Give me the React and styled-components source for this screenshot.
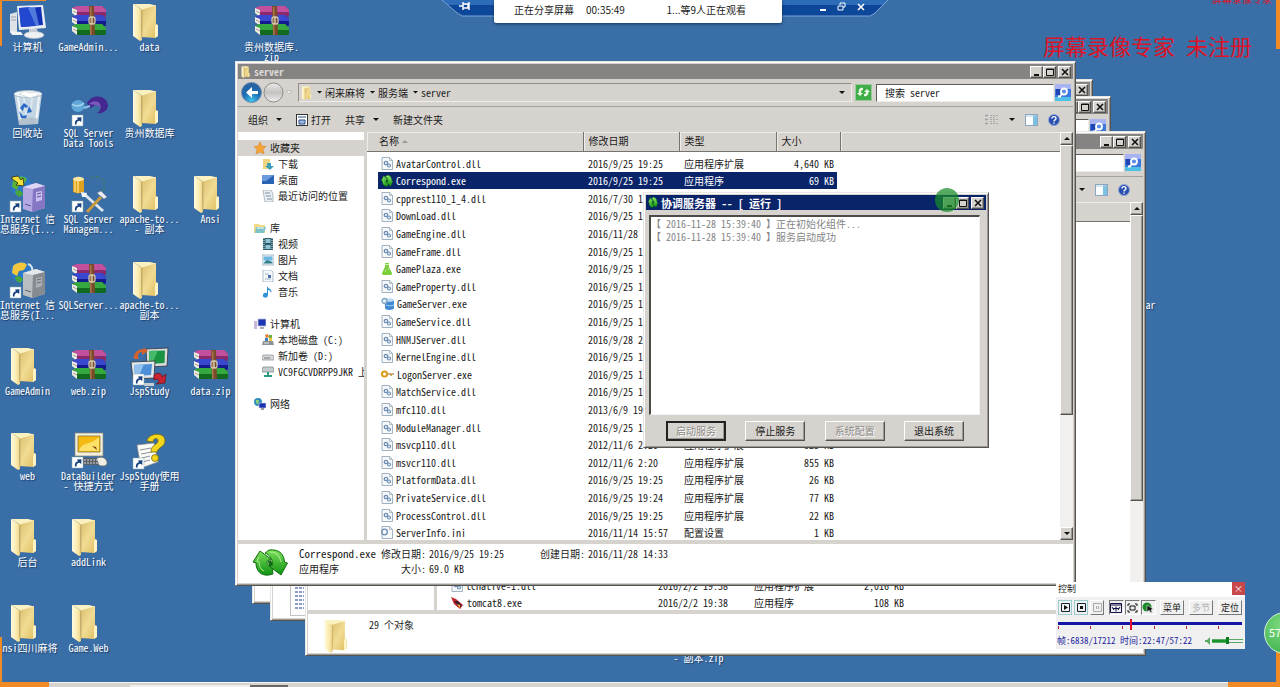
import React from "react";
import styled, { createGlobalStyle, css } from "styled-components";

const Global = createGlobalStyle`
  *, *::before, *::after { box-sizing: border-box; }
  html, body, #root { height: 100%; margin: 0; }
  body {
    overflow: hidden;
    background: #3a6ea7;
    color: #1a1a1a;
    font: 10px/14px "Noto Sans Mono CJK SC", "Liberation Mono", "Noto Sans CJK SC", monospace;
  }
  button, input { font: inherit; color: inherit; margin: 0; padding: 0; border: 0; background: none; }
  ul { list-style: none; margin: 0; padding: 0; }
  p { margin: 0; }
  svg { display: block; flex: none; }
`;

const raised = css`
  border: 1px solid;
  border-color: #ffffff #55534f #55534f #ffffff;
  box-shadow: inset -1px -1px 0 #9c9994;
`;

/* ---------- drawings ---------- */

const FolderIcon = ({ w = 35, h = 38, box = "0 0 35 38" }) => (
  <svg width={w} height={h} viewBox={box}>
    <defs>
      <linearGradient id="fBack" x1="0" x2="1" y1="0" y2="1">
        <stop offset="0" stopColor="#d8bd6c" />
        <stop offset=".5" stopColor="#f1dc94" />
        <stop offset="1" stopColor="#dfbd5c" />
      </linearGradient>
      <linearGradient id="fFront" x1="0" x2="1">
        <stop offset="0" stopColor="#fffbe0" />
        <stop offset=".6" stopColor="#faeaad" />
        <stop offset="1" stopColor="#ecd283" />
      </linearGradient>
    </defs>
    <path d="M9 3 24 2V22l2 1v10l-3 2-13-1z" fill="url(#fBack)" />
    <path d="M24 21l2 1v11l-3 2V24z" fill="#fdf3c4" />
    <path d="M1 1h17l6 1.500-14 4z" fill="#fbf0c0" />
    <path d="M1 1 9 6l1 31-2 1L1 33z" fill="url(#fFront)" />
    <path d="M10 7v28" stroke="#c7a552" strokeWidth=".8" />
  </svg>
);

const SmallFolder = ({ w = 11, h = 13 }) => <FolderIcon w={w} h={h} box="0 0 27 38" />;

const Shortcut = ({ x = 0, y = 25 }) => (
  <g transform={`translate(${x} ${y})`}>
    <rect width="11" height="11" fill="#fff" stroke="#8aa" strokeWidth=".5" />
    <path d="M3 9.500C2.500 6 4 4.500 6 4.500L5 2.500 9.500 2.200 9.200 7 7.500 5.800C5.500 5.800 4.500 7 4.500 9.500z" fill="#17417f" />
  </g>
);

const RarIcon = () => (
  <svg width="36" height="34" viewBox="0 -2 36 34">
    {[["#c2509c", "#8a2a6c", 2], ["#3a48d0", "#141b8c", 11], ["#35a83f", "#126a1e", 20]].map(([a, b, y]) => (
      <g key={y}>
        <path d={`M1 ${y + 1} 6 ${y - 1}H31L35 ${y + 3}v6l-1 1H6L1 ${y + 5}z`} fill={b} />
        <path d={`M1 ${y + 1} 6 ${y - 1}H31L35 ${y + 3}H6z`} fill={a} />
        <path d={`M1 ${y + 1} 6 ${y + 3}v7L1 ${y + 6}z`} fill="#f0ece4" />
        <path d={`M6 ${y + 4}H35`} stroke={a} strokeWidth="2" />
        <path d={`M2 ${y + 4} 6 ${y + 6}`} stroke="#8a8680" strokeWidth=".8" />
      </g>
    ))}
    <path d="M18 1h5l1 29h-5z" fill="#7a4a2a" />
    <path d="M19 2h1.500v28H19z" fill="#a8744a" />
    <rect x="18" y="12" width="6" height="7" rx="2" fill="none" stroke="#cfc7a8" strokeWidth="1.300" />
    <path d="M21 12v7" stroke="#e8e2c8" strokeWidth="1.200" />
  </svg>
);

const ComputerIcon = () => (
  <svg width="38" height="36" viewBox="0 -1 38 36">
    <path d="M1 10 8 8v20l-7 1z" fill="#dfe2e6" />
    <path d="M2 13h5M2 16h5" stroke="#9aa0a8" />
    <path d="M8 2 34 1 37 24 10 26z" fill="#e9edf2" />
    <path d="M10 4 32 3 34 21 12 23z" fill="#1230b4" />
    <path d="M10 4 21 3 27 22 12 23z" fill="#2148cf" />
    <path d="M19 3.500 26 3 30 21 27 22z" fill="#78a8f2" opacity=".6" />
    <path d="M20 25h8l1 4h-9z" fill="#c9ced6" />
    <ellipse cx="25" cy="31" rx="10" ry="3.500" fill="#eef0f3" stroke="#b7bcc4" strokeWidth=".6" />
    <path d="M1 27 12 28 14 31 3 31z" fill="#f2f3f5" />
  </svg>
);

const BinIcon = () => (
  <svg width="32" height="37" viewBox="0 0 32 37">
    <path d="M2 5 30 4 26 35 7 36z" fill="#cfdce8" opacity=".92" />
    <path d="M6 8 9 33M27 7 24 34" stroke="#fff" strokeWidth="2" opacity=".8" />
    <path d="M12 9l3 24M20 9l-1 10" stroke="#eef4f8" strokeWidth="2" opacity=".6" />
    <ellipse cx="16" cy="5" rx="14" ry="3.500" fill="#f6f9fb" stroke="#a3b4c2" strokeWidth=".8" />
    <path d="M7 5 13 2l5 2 6-1 3 3-9 3z" fill="#fff" stroke="#b4bec8" strokeWidth=".5" />
    <path d="M8 19l4-5 4 3-2 2-2-1-1 4zM17 17l3 6-5 1zM7 22l4 5 4-1-1 4-5-1z" fill="#2869c8" />
    <path d="M7 31c6-3 13-3 19-1l-1 5-18 1z" fill="#aebbc6" opacity=".8" />
  </svg>
);

const DataToolsIcon = () => (
  <svg width="38" height="40" viewBox="0 -4 38 40">
    <ellipse cx="8" cy="13" rx="6.500" ry="6" fill="#5fa8d8" />
    <path d="M2 11c3 3 9 2 12-1" stroke="#a8d4ee" strokeWidth="1.500" fill="none" />
    <path d="M17 10c5-10 20-8 21 2 0 6-6 9-11 8 5-3 4-8 0-8s-5 4-8 3z" fill="#42288f" />
    <path d="M19 11c5-5 12-3 12 4-4-4-8-3-12-4z" fill="#7a58bd" />
    <path d="M14 15 20 13" stroke="#8cc7e8" strokeWidth="2" />
    <Shortcut x={2} y={22} />
  </svg>
);

const IisIcon = ({ gray }) => (
  <svg width="38" height="38" viewBox="0 0 38 38">
    <circle cx="12" cy="11" r="10.500" fill="#2a79c8" />
    <path d="M4 5c4-4 11-5 14-1l-3 5-5 1-2 5-5-3z" fill={gray ? "#f3c63c" : "#58b13b"} />
    <path d="M6 16c4-2 7 0 8 3l-3 3c-3-1-5-3-5-6z" fill="#4aa63a" />
    {gray ? <path d="M19 3c4 1 5 5 4 9" stroke="#d8e8f0" strokeWidth="2" fill="none" /> : <path d="M3 2 9 1l3 4 2-2 1 8-8-1 2-2-6-4z" fill="#f0e23a" stroke="#2b2b10" strokeWidth=".8" />}
    <path d="M14 12 27 8 36 11 36 33 23 37 14 34z" fill={gray ? "#b9bec2" : "#b4a8e0"} />
    <path d="M14 12 27 8 36 11 24 14z" fill={gray ? "#e6e9eb" : "#ddd6f4"} />
    <path d="M24 14 36 11V33L23 37z" fill={gray ? "#858b90" : "#8577c4"} />
    <path d="M27 17l6-1v9l-6 2z" fill={gray ? "#a9afb3" : "#c9bff0"} />
    <path d="M28 19l4-1M28 22l4-1M16 29l6 2" stroke={gray ? "#5f666b" : "#5c4f9a"} />
    <Shortcut x={1} y={26} />
  </svg>
);

const ManagementIcon = () => (
  <svg width="38" height="38" viewBox="0 0 38 38">
    <path d="M3 4v12c0 3 11 3 11 0V4z" fill="#e0a21e" />
    <path d="M5 5v12M8 5v13" stroke="#f9d97a" strokeWidth="1.500" />
    <ellipse cx="8.500" cy="4" rx="5.500" ry="2.200" fill="#fbe7a2" />
    <path d="M21 3c6-3 12 0 13 5v8l-5 2" stroke="#3d7c6b" strokeWidth="1.500" strokeDasharray="3 2" fill="none" />
    <path d="M14 19 33 36" stroke="#dfe6ee" strokeWidth="3" />
    <path d="M31 22 17 37" stroke="#c79a42" strokeWidth="3" />
    <path d="M27 18l7 6 3-2-6-6z" fill="#e9edf2" stroke="#7c8794" strokeWidth=".6" />
    <path d="M11 17l6 1-1 4-4 0z" fill="#f3f6f9" />
    <Shortcut x={2} y={26} />
  </svg>
);

const StudyIcon = () => (
  <svg width="40" height="40" viewBox="0 0 40 40">
    <path d="M16 2 38 1 37 19 17 20z" fill="#d9dde0" stroke="#333" strokeWidth=".8" />
    <path d="M19 4 35 3.500 34.500 16 19.500 17z" fill="#199242" />
    <path d="M19 4 28 3.500 22 17h-3z" fill="#45b96a" />
    <path d="M1 15 25 14 24 31 3 32z" fill="#e1e6ea" stroke="#333" strokeWidth=".8" />
    <path d="M4 18 22 17 21 28 5 29z" fill="#4c8ed8" />
    <path d="M4 18 14 17 9 29H5z" fill="#93c1ee" />
    <path d="M4 12C3 6 8 2 14 2l-1-2 5 4-6 4v-3c-4 0-5 4-3 7z" fill="#d5622a" />
    <path d="M24 28c5-4 9 0 8 2l4-3-1 9-9 1 3-2c0-3-2-3-5-2z" fill="#c92230" stroke="#5a0d14" strokeWidth=".6" />
    <path d="M14 36h10v3H14z" fill="#c8cdd1" />
    <Shortcut x={3} y={27} />
  </svg>
);

const BuilderIcon = () => (
  <svg width="38" height="37" viewBox="0 0 38 37">
    <path d="M5 1H33V24H5z" fill="#f2efdf" stroke="#8a8672" strokeWidth=".7" />
    <path d="M8 4H30V20H8z" fill="#f5b913" stroke="#7a6a1f" strokeWidth=".7" />
    <path d="M9 19C12 9 20 14 29 5v14z" fill="#fbe06a" />
    <path d="M22 14l4 1 1 3z" fill="#7c3c10" />
    <path d="M12 26h18v7H12z" fill="#5a5f66" />
    <path d="M14 28h14M14 31h14" stroke="#d7dbdf" strokeDasharray="2 1" />
    <path d="M27 26c5-2 9 0 10 4s-5 5-8 3" fill="#f0eee4" stroke="#6e6a5c" strokeWidth=".7" />
    <Shortcut x={2} y={25} />
  </svg>
);

const HelpDocIcon = () => (
  <svg width="38" height="38" viewBox="0 0 38 38">
    <path d="M6 13 23 11 27 30 10 36z" fill="#fbfbf7" stroke="#8d8d84" strokeWidth=".7" />
    <path d="M9 18l11-2M10 22l11-2M11 26l8-2M11 30l8-2" stroke="#8d9299" />
    <path d="M16 9C17 1 34-1 34 9c0 6-7 6-8 11h-6c0-8 7-7 7-11 0-4-5-3-5 1z" fill="#f2d51c" stroke="#7b6a0b" strokeWidth=".8" />
    <circle cx="24" cy="26" r="3.500" fill="#f2d51c" stroke="#7b6a0b" strokeWidth=".8" />
    <Shortcut x={2} y={26} />
  </svg>
);

const SyncIcon = ({ w = 12, h = 12 }) => (
  <svg width={w} height={h} viewBox="0 0 36 28" preserveAspectRatio="none">
    <defs>
      <linearGradient id="syncG" x1="0" y1="0" x2="0" y2="1">
        <stop offset="0" stopColor="#7be05a" />
        <stop offset="1" stopColor="#0f9113" />
      </linearGradient>
    </defs>
    <path d="M8 2 1 13l3 1c0 8 5 13 13 12l4-1-1-7c-4 0-5-3-5-6l4-2z" fill="url(#syncG)" stroke="#13700f" />
    <path d="M29 26l6.500-12-3-1C32 4 26 0 17 1l-4 3c5 2 7 6 8 11l-4 2z" fill="url(#syncG)" stroke="#13700f" />
    <path d="M16 12l3-1 2 5-4 2z" fill="#0c6a10" />
    <path d="M18 3c6 0 10 4 11 10M7 8 5 12l2 1c0 4 2 8 5 9" stroke="#b5f29a" strokeWidth="1.300" fill="none" opacity=".7" />
  </svg>
);

const DllIcon = ({ ini }) => (
  <svg width="12" height="13" viewBox="0 0 12 13">
    <path d="M1 .5h7.500l3 3V12.500H1z" fill="#f6f9fc" stroke="#97a8b8" strokeWidth=".9" />
    <path d="M8.500.5v3h3" fill="none" stroke="#97a8b8" strokeWidth=".7" />
    <circle cx={ini ? 3.500 : 5} cy="6" r={ini ? 2.800 : 1.700} fill="none" stroke="#6d8db2" strokeWidth="1.300" />
    {!ini && <circle cx="8" cy="8.500" r="1.500" fill="none" stroke="#6d8db2" strokeWidth="1.200" />}
  </svg>
);

const FlaskIcon = () => (
  <svg width="12" height="12" viewBox="0 0 12 12">
    <path d="M4 0h4v4l3 6c0 2-1 2-2 2H3c-2 0-2-1-2-2l3-6z" fill="#7ccf3a" />
    <path d="M4.500 1.500h3M4 8h1M7 6h1" stroke="#e7f8cf" />
  </svg>
);

const ServerIcon = () => (
  <svg width="13" height="13" viewBox="0 0 13 13">
    <path d="M4 3v8c0 2.500 9 2.500 9 0V3z" fill="#3f88d2" />
    <ellipse cx="8.500" cy="3" rx="4.500" ry="1.800" fill="#bcdcf5" />
    <circle cx="3.500" cy="4" r="2.500" fill="#e4eff8" stroke="#7fa6c8" strokeWidth="1.400" />
    <path d="M5 8c2 1 5 1 8 0" stroke="#a9cff0" fill="none" />
  </svg>
);

const KeyIcon = () => (
  <svg width="13" height="12" viewBox="0 0 13 12">
    <circle cx="3.500" cy="6" r="2.600" fill="none" stroke="#dc9c12" strokeWidth="2" />
    <path d="M6 6h7M10 6v2" stroke="#b99a56" strokeWidth="1.600" />
  </svg>
);

const TomcatIcon = () => (
  <svg width="13" height="13" viewBox="0 0 13 13">
    <path d="M0 1 5 3 12 9 9 13 3 8z" fill="#c3262c" />
    <path d="M3 5 7 5 11 10 8 11z" fill="#3a2030" />
    <path d="M6 8l3 1 0 3z" fill="#f0c33c" />
  </svg>
);

const navDrawings = {
  star: <path d="M6 0 8 4l4 .5-3 3 1 4.500-4-2-4 2 1-4.500-3-3L4 4z" fill="#f6a43a" stroke="#c9781a" strokeWidth=".5" />,
  down: <><path d="M1 1h7v10H1z" fill="#f0d67e" /><path d="M5 5h4v3h3l-4 4-5-4h2z" fill="#3f9fb4" /></>,
  desk: <><path d="M0 1h12v9H0z" fill="#2b63b4" /><path d="M0 1h12L4 7H0z" fill="#6b9bdc" /></>,
  recent: <><path d="M1 0h8l2 4v8H3z" fill="#e8eef2" stroke="#8fa0ac" strokeWidth=".7" /><path d="M3 3h5M4 6h5M5 9h5" stroke="#7d95a6" /></>,
  lib: <><path d="M0 2h5l1 1h5v8H0z" fill="#f1d989" /><path d="M2 5h10l-2 6H1z" fill="#7ec3c8" /><path d="M3 6h7" stroke="#fff" /></>,
  video: <><path d="M1 0h10v12H1z" fill="#2c5c6c" /><path d="M3.500 1h5v4h-5zM3.500 7h5v4h-5z" fill="#8fc5d2" /><path d="M2 0v12M10 0v12" stroke="#dbe8ec" strokeDasharray="1 1" /></>,
  pic: <><path d="M0 1h12v10H0z" fill="#e8f1f5" stroke="#8fa5b2" strokeWidth=".7" /><path d="M1.500 2.500h9v4h-9z" fill="#6fb6e2" /><path d="M1.500 9 5 6l5.500 2v1.500h-9z" fill="#2f7e8f" /></>,
  doc: <><path d="M1 0h8l2 2v10H1z" fill="#f6f9fb" stroke="#90a5b8" strokeWidth=".7" /><path d="M3 4h4M3 9h6" stroke="#9fb4c6" /><path d="M6 5h3v3H6z" fill="#4a6fae" /></>,
  music: <path d="M5 0c1 3 6 3 4 7 0-2-2-3-3-3v5c0 4-6 3-5 0 0-2 2-2.500 4-2z" fill="#2f93d6" />,
  pc: <><path d="M4 1h8v7H4z" fill="#1c35b4" stroke="#b9c0dc" strokeWidth=".8" /><path d="M6 9h4v2H6z" fill="#a9a9b9" /><path d="M0 3h3v8H0z" fill="#c8b8dc" /></>,
  disk: <><path d="M1 7h10l1 4H0z" fill="#8d9499" /><path d="M2 9h5" stroke="#e2e6e8" /><path d="M3 1 6 0l1 3-3 1z" fill="#e07d2a" /><path d="M7 1l3 0v3H7z" fill="#6bb43c" /><path d="M3 4l3 0v3H3z" fill="#3b7ec2" /><path d="M7 4h3v3H7z" fill="#efc63a" /></>,
  drive: <><path d="M1 5h10l1 2v3H0V7z" fill="#d5d8da" stroke="#888d90" strokeWidth=".7" /><path d="M2 8h6" stroke="#777" /></>,
  net: <><path d="M1 1h10l1 3v2H0V4z" fill="#c3cacd" stroke="#7b8487" strokeWidth=".7" /><path d="M6 6v5M2 10h8" stroke="#2d9a84" strokeWidth="2" /></>,
  world: <><circle cx="4" cy="4" r="4" fill="#2f8fb8" /><path d="M2 2l3 0-1 4-2-1z" fill="#8fd07a" /><path d="M5 5h7v5H5z" fill="#1c2fae" stroke="#c2c8e2" strokeWidth=".7" /><path d="M7 10h3v2H7z" fill="#999" /></>,
};

const NavIcon = ({ kind }) => (
  <svg width="12" height="12" viewBox="0 0 12 12">{navDrawings[kind]}</svg>
);

const Caret = ({ s = 6 }) => (
  <svg width={s} height={s / 2} viewBox="0 0 6 3"><path d="M0 0h6L3 3z" fill="#111" /></svg>
);

const SearchGlyph = () => (
  <svg width="16" height="17" viewBox="0 0 16 17">
    <rect width="16" height="17" fill="#3f78dc" />
    <path d="M0 0h16v5H0z" fill="#a8b4f2" />
    <path d="M0 13h16v4H0z" fill="#4fc0e6" />
    <path d="M1 5h4v6H1z" fill="#1f45b4" />
    <circle cx="9" cy="7.500" r="3" fill="#5a8ee6" stroke="#fff" strokeWidth="1.800" />
    <path d="M3 12.500h2l2-3" stroke="#fff" strokeWidth="1.800" fill="none" />
  </svg>
);

const RefreshGlyph = () => (
  <svg width="17" height="17" viewBox="0 0 17 17">
    <rect x=".5" y=".5" width="16" height="16" fill="#3fae49" stroke="#9cc79c" />
    <path d="M4 9c-1-3 1-6 4-5v2c-2 0-2 1-2 3h2l-3 3-3-3zM9 8l3-3 3 3h-1.500c0 3-2 5-4.500 4v-2c2 0 2-1 2-2z" fill="#e9f8e4" />
  </svg>
);

const HelpGlyph = () => (
  <svg width="12" height="12" viewBox="0 0 12 12">
    <circle cx="6" cy="6" r="5.500" fill="#2a4fae" stroke="#8ea3d8" />
    <path d="M4 4.500C4 2 8 2 8 4.500 8 6 6 5.800 6 7.500M6 8.500v1.300" stroke="#fff" strokeWidth="1.400" fill="none" />
  </svg>
);

const PaneGlyph = () => (
  <svg width="13" height="12" viewBox="0 0 13 12">
    <rect x=".5" y=".5" width="12" height="11" fill="#fbfdff" stroke="#8ba7bd" />
    <path d="M8 1h4v10H8z" fill="#7cc0e4" />
    <path d="M1 2h11" stroke="#b8cfe0" />
  </svg>
);

const ViewGlyph = () => (
  <svg width="13" height="12" viewBox="0 0 13 12">
    <path d="M0 1.500h3M0 5.500h3M0 9.500h3" stroke="#9aa0a6" strokeWidth="1.500" />
    <path d="M5 1.500h8M5 5.500h8M5 9.500h8M5 3.500h5M5 7.500h5" stroke="#a6a6a6" strokeDasharray="2 1" />
  </svg>
);

const NavArrows = () => (
  <svg width="52" height="23" viewBox="0 0 52 23">
    <defs>
      <radialGradient id="backG" cx=".5" cy=".9" r=".9">
        <stop offset="0" stopColor="#3fc4ec" />
        <stop offset=".5" stopColor="#1f6cb2" />
        <stop offset="1" stopColor="#2a5f9c" />
      </radialGradient>
      <linearGradient id="fwdG" x1="0" y1="0" x2="0" y2="1">
        <stop offset="0" stopColor="#ececec" />
        <stop offset=".5" stopColor="#c4c2c0" />
        <stop offset="1" stopColor="#efefef" />
      </linearGradient>
    </defs>
    <circle cx="10.500" cy="11.500" r="10" fill="url(#backG)" stroke="#6f8fae" />
    <path d="M5 11.500 11 6v4h6v3h-6v4z" fill="#fff" />
    <circle cx="32.500" cy="11.500" r="9.500" fill="url(#fwdG)" stroke="#8f8d8b" />
    <path d="M45 10h6l-3 3z" fill="#f5f5f5" stroke="#aaa" strokeWidth=".6" />
  </svg>
);

/* ---------- desktop ---------- */

const Screen = styled.main`
  position: relative;
  height: 100%;
  overflow: hidden;
`;

const IconGrid = styled.ul`
  display: grid;
  grid-template-columns: repeat(21, 61px);
  grid-template-rows: repeat(8, 1fr);
  height: 100%;
  margin-left: -3px;
`;

const IconCell = styled.li`
  grid-column: ${(p) => p.$col};
  grid-row: ${(p) => p.$row};
  display: flex;
  flex-direction: column;
  align-items: center;
  min-width: 0;
`;

const IconArt = styled.span`
  display: flex;
  justify-content: center;
  width: 40px;
  height: 42px;
  padding-top: 3px;
  flex: none;
`;

const IconLabel = styled.span`
  color: #fff;
  line-height: 10px;
  white-space: pre;
  text-align: center;
  text-shadow: 1px 1px 1px #1c3f68;
`;

const desktopIcons = [
  [1, 1, <ComputerIcon />, "计算机"],
  [2, 1, <RarIcon />, "GameAdmin..."],
  [3, 1, <FolderIcon />, "data"],
  [5, 1, <RarIcon />, "贵州数据库.\nzip"],
  [1, 2, <BinIcon />, "回收站"],
  [2, 2, <DataToolsIcon />, "SQL Server\nData Tools"],
  [3, 2, <FolderIcon />, "贵州数据库"],
  [1, 3, <IisIcon />, "Internet 信\n息服务(I..."],
  [2, 3, <ManagementIcon />, "SQL Server\nManagem..."],
  [3, 3, <FolderIcon />, "apache-to...\n- 副本"],
  [4, 3, <FolderIcon />, "Ansi"],
  [1, 4, <IisIcon gray />, "Internet 信\n息服务(I..."],
  [2, 4, <RarIcon />, "SQLServer..."],
  [3, 4, <FolderIcon />, "apache-to...\n副本"],
  [19, 4, null, "          ar"],
  [1, 5, <FolderIcon />, "GameAdmin"],
  [2, 5, <RarIcon />, "web.zip"],
  [3, 5, <StudyIcon />, "JspStudy"],
  [4, 5, <RarIcon />, "data.zip"],
  [1, 6, <FolderIcon />, "web"],
  [2, 6, <BuilderIcon />, "DataBuilder\n- 快捷方式"],
  [3, 6, <HelpDocIcon />, "JspStudy使用\n手册"],
  [1, 7, <FolderIcon />, "后台"],
  [2, 7, <FolderIcon />, "addLink"],
  [1, 8, <FolderIcon />, "Ansi四川麻将"],
  [2, 8, <FolderIcon />, "Game.Web"],
  [12, 8, null, "\n- 副本.zip"],
];

const Watermark = styled.p`
  position: absolute;
  top: ${(p) => (p.$small ? "-8px" : "29px")};
  right: ${(p) => (p.$small ? "8px" : "28px")};
  color: #dc1428;
  font-size: ${(p) => (p.$small ? "10px" : "22px")};
  line-height: ${(p) => (p.$small ? "14px" : "32px")};
  white-space: pre;
`;

const Corner = styled.span`
  position: absolute;
  ${(p) => p.$v}: 0;
  ${(p) => p.$h}: 0;
  width: ${(p) => p.$w}px;
  height: ${(p) => p.$t}px;
  border: 0 solid #f08a24;
  border-${(p) => p.$v}-width: ${(p) => p.$edge}px;
  border-${(p) => p.$h}-width: ${(p) => p.$side}px;
`;

const Taskbar = styled.footer`
  position: absolute;
  left: 0;
  right: 0;
  bottom: 0;
  display: flex;
  height: 5px;
  padding: 2px 0 0 130px;
  border-top: 1px solid #f4f4f2;
  background: #d6d3ce;
`;

const TaskSlot = styled.span`
  width: ${(p) => p.$w}px;
  background: ${(p) => (p.$on ? "#6b6866" : "#f0efec")};
`;

/* ---------- sharing bar ---------- */

const ShareDock = styled.header`
  position: absolute;
  top: 0;
  left: 442px;
  width: 446px;
  height: 17px;
`;

const SharePanel = styled.div`
  position: absolute;
  top: 0;
  left: 52px;
  width: 288px;
  height: 23px;
  display: flex;
  align-items: center;
  gap: 12px;
  padding: 0 20px 4px;
  background: #fff;
  border-radius: 0 0 2px 2px;
  box-shadow: 0 1px 3px #16335a;
  font-family: "Noto Sans CJK SC", sans-serif;
`;

const ShareViewers = styled.span`
  margin-left: auto;
  margin-right: 16px;
`;

const DockButtons = styled.div`
  position: absolute;
  top: 0;
  left: 374px;
  display: flex;
  gap: 6px;
`;

const DockButton = styled.button`
  width: 13px;
  height: 13px;
  display: grid;
  place-items: center;
`;

/* ---------- explorer window ---------- */

const Frame = styled.section`
  position: absolute;
  left: ${(p) => p.$x}px;
  top: ${(p) => p.$y}px;
  width: ${(p) => p.$w}px;
  height: ${(p) => p.$h}px;
  display: flex;
  flex-direction: column;
  padding: 2px;
  background: #d6d3ce;
  border: 1px solid;
  border-color: #e9e7e4 #55534f #55534f #e9e7e4;
  box-shadow: inset 1px 1px 0 #fff, inset -1px -1px 0 #9c9994;
`;

const TitleBar = styled.header`
  display: flex;
  align-items: center;
  gap: 3px;
  height: 15px;
  flex: none;
  padding: 0 2px;
  background: ${(p) => (p.$active ? "#0a246a" : "#868383")};
  color: ${(p) => (p.$active ? "#ffffff" : "#dedbd8")};
  font-weight: bold;
  font-size: ${(p) => (p.$active ? "11px" : "10px")};
`;

const TitleButtons = styled.div`
  display: flex;
  margin-left: auto;
`;

const CaptionButton = styled.button`
  ${raised}
  width: 13px;
  height: 12px;
  display: grid;
  place-items: center;
  background: #d6d3ce;
  &:last-child { margin-left: 2px; }
`;

const glyphs = {
  min: <path d="M1 7h5" stroke="#111" strokeWidth="2" />,
  max: <path d="M.5 1h7v6.500h-7zM.5 1.500h7" stroke="#111" fill="none" />,
  close: <path d="M1 1l6 6M7 1 1 7" stroke="#111" strokeWidth="1.600" />,
};

const Caption = ({ kind, label }) => (
  <CaptionButton type="button" aria-label={label}>
    <svg width="8" height="8" viewBox="0 0 8 8">{glyphs[kind]}</svg>
  </CaptionButton>
);

const CaptionSet = () => (
  <TitleButtons>
    <Caption kind="min" label="最小化" />
    <Caption kind="max" label="最大化" />
    <Caption kind="close" label="关闭" />
  </TitleButtons>
);

const AddressRow = styled.div`
  display: flex;
  align-items: center;
  gap: 3px;
  height: 28px;
  flex: none;
  padding: 0 2px 0 3px;
  border-bottom: 1px solid #a5a29d;
`;

const AddressBox = styled.div`
  flex: 1;
  display: flex;
  align-items: center;
  gap: 5px;
  height: 19px;
  padding: 0 6px 0 2px;
  margin-left: 2px;
  border: 1px solid;
  border-color: #908d89 #efedea #efedea #908d89;
  > :last-child { margin-left: auto; }
`;

const PlainButton = styled.button`
  display: flex;
  align-items: center;
  gap: 3px;
  white-space: nowrap;
`;

const SearchBox = styled.input`
  width: 178px;
  height: 18px;
  padding-left: 8px;
  background: #fff;
  border: 1px solid;
  border-color: #5c5a57 #efedea #efedea #5c5a57;
  margin-left: 1px;
  margin-right: -2px;
  &::placeholder { color: #1a1a1a; opacity: 1; }
`;

const Toolbar = styled.div`
  display: flex;
  align-items: center;
  height: 25px;
  flex: none;
  gap: 14px;
  padding: 0 13px 0 10px;
`;

const ToolbarEnd = styled.div`
  display: flex;
  align-items: center;
  gap: 10px;
  margin-left: auto;
`;

const Body = styled.div`
  display: flex;
  flex: 1;
  min-height: 0;
  background: #fff;
`;

const NavPane = styled.ul`
  width: 126px;
  flex: none;
  padding-top: 8px;
  overflow: hidden;
`;

const NavItem = styled.li`
  height: 16px;
  background: ${(p) => (p.$on ? "#d6d3ce" : "none")};
`;

const NavButton = styled.button`
  display: flex;
  align-items: center;
  gap: 4px;
  height: 16px;
  padding-left: ${(p) => (p.$child ? 24 : 16)}px;
  white-space: nowrap;
`;

const ListPane = styled.div`
  flex: 1;
  min-width: 0;
  overflow: hidden;
  border-left: 3px solid #d6d3ce;
`;

const Files = styled.table`
  width: 100%;
  table-layout: fixed;
  border-collapse: collapse;
  white-space: nowrap;
`;

const HeadCell = styled.th`
  height: 19px;
  padding: 0 0 0 ${(p) => (p.$first ? 12 : 5)}px;
  text-align: left;
  font-weight: normal;
  background: #d6d3ce;
  border-bottom: 1px solid #77746f;
  border-right: ${(p) => (p.$last ? "0" : "1px solid #77746f")};
  box-shadow: inset 1px 1px 0 #efedea;
`;

const Gap = styled.tr`
  height: 3px;
`;

const FileRow = styled.tr`
  height: 18px;
  line-height: 15px;
  &:nth-child(5n + 3), &:nth-child(5n + 5) { height: 17px; }
  color: ${(p) => (p.$on ? "#ffffff" : "#1a1a1a")};
  td { padding: 0; }
  td:nth-child(n + 2):nth-child(-n + 5) { background: ${(p) => (p.$on ? "#0a246a" : "none")}; }
  td:nth-child(3), td:nth-child(4) { padding-left: 5px; }
  td:nth-child(5) { padding-right: 3px; text-align: right; }
`;

const FileName = styled.span`
  display: flex;
  align-items: center;
  gap: 3px;
  padding-left: 3px;
  height: 15px;
`;

const Scroll = styled.div`
  width: 13px;
  flex: none;
  display: flex;
  flex-direction: column;
  background: #f1f0ee;
`;

const ScrollButton = styled.button`
  ${raised}
  height: 13px;
  flex: none;
  display: grid;
  place-items: center;
  background: #d6d3ce;
  svg { transform: ${(p) => (p.$up ? "rotate(180deg)" : "none")}; }
`;

const Thumb = styled.div`
  ${raised}
  height: ${(p) => p.$h}px;
  background: #d6d3ce;
  margin-bottom: auto;
`;

const Details = styled.footer`
  display: flex;
  height: 43px;
  flex: none;
  gap: 11px;
  padding: 4px 14px 0;
  border-top: 4px solid #d6d3ce;
  background: #fff;
`;

const DetailArt = styled.div`
  width: 36px;
  padding-top: 1px;
`;

const DetailGrid = styled.dl`
  display: grid;
  grid-template-columns: auto 47px 108px auto auto;
  grid-auto-rows: 15px;
  align-content: start;
  column-gap: 3px;
  margin: -2px 0 0;
  line-height: 15px;
  white-space: nowrap;
  dt, dd { margin: 0; }
  dt { text-align: right; }
`;

const DetailName = styled.dd`
  font-size: 11px;
`;

const navTree = [
  ["star", "收藏夹", 0, true], ["down", "下载", 1], ["desk", "桌面", 1], ["recent", "最近访问的位置", 1], null,
  ["lib", "库", 0], ["video", "视频", 1], ["pic", "图片", 1], ["doc", "文档", 1], ["music", "音乐", 1], null,
  ["pc", "计算机", 0], ["disk", "本地磁盘 (C:)", 1], ["drive", "新加卷 (D:)", 1], ["net", "VC9FGCVDRPP9JKR 上", 1], null,
  ["world", "网络", 0],
];

const ext = "应用程序扩展";
const app = "应用程序";
const serverFiles = [
  ["AvatarControl.dll", "2016/9/25 19:25", ext, "4,640 KB"],
  ["Correspond.exe", "2016/9/25 19:25", app, "69 KB", <SyncIcon />],
  ["cpprest110_1_4.dll", "2016/7/30 1", "", ""],
  ["DownLoad.dll", "2016/9/25 1", "", ""],
  ["GameEngine.dll", "2016/11/28", "", ""],
  ["GameFrame.dll", "2016/9/25 1", "", ""],
  ["GamePlaza.exe", "2016/9/25 1", "", "", <FlaskIcon />],
  ["GameProperty.dll", "2016/9/25 1", "", ""],
  ["GameServer.exe", "2016/9/25 1", "", "", <ServerIcon />],
  ["GameService.dll", "2016/9/25 1", "", ""],
  ["HNMJServer.dll", "2016/9/28 2", "", ""],
  ["KernelEngine.dll", "2016/9/25 1", "", ""],
  ["LogonServer.exe", "2016/9/25 1", "", "", <KeyIcon />],
  ["MatchService.dll", "2016/9/25 1", "", ""],
  ["mfc110.dll", "2013/6/9 19", "", ""],
  ["ModuleManager.dll", "2016/9/25 1", "", ""],
  ["msvcp110.dll", "2012/11/6 2:20", ext, "523 KB"],
  ["msvcr110.dll", "2012/11/6 2:20", ext, "855 KB"],
  ["PlatformData.dll", "2016/9/25 19:25", ext, "26 KB"],
  ["PrivateService.dll", "2016/9/25 19:24", ext, "77 KB"],
  ["ProcessControl.dll", "2016/9/25 19:25", ext, "22 KB"],
  ["ServerInfo.ini", "2016/11/14 15:57", "配置设置", "1 KB", <DllIcon ini />],
];
const blank = ["", "", "", "", <span />];
const tomcatFiles = [
  ...Array(20).fill(blank),
  ["tcnative-1.dll", "2016/2/2 19:38", ext, "2,016 KB"],
  ["tomcat8.exe", "2016/2/2 19:38", app, "108 KB", <TomcatIcon />],
];

function Explorer({ x, y, title, path = [], nav = [], files = [], selected, thumb = 270, details }) {
  return (
    <Frame $x={x} $y={y} $w={841} $h={525} aria-label={title || "资源管理器"}>
      <TitleBar>
        <SmallFolder h={12} />
        {title}
        <CaptionSet />
      </TitleBar>
      <AddressRow>
        <NavArrows />
        <AddressBox>
          <SmallFolder h={14} />
          {path.map((p) => (
            <PlainButton type="button" key={p}><Caret s={5} />{p}</PlainButton>
          ))}
          <Caret />
        </AddressBox>
        <PlainButton type="button" aria-label="刷新"><RefreshGlyph /></PlainButton>
        <SearchBox type="search" aria-label="搜索" placeholder={title ? `搜索 ${title}` : ""} />
        <PlainButton type="button" aria-label="开始搜索"><SearchGlyph /></PlainButton>
      </AddressRow>
      <Toolbar>
        {title && (
          <>
            <PlainButton type="button">组织&nbsp;<Caret /></PlainButton>
            <PlainButton type="button">
              <svg width="12" height="12" viewBox="0 0 12 12">
                <rect x=".5" y=".5" width="11" height="11" fill="#fff" stroke="#333" />
                <path d="M2 3h8M3 6h6v4H3z" stroke="#2b4f8e" fill="#9fb8dc" />
              </svg>
              打开
            </PlainButton>
            <PlainButton type="button">共享&nbsp;<Caret /></PlainButton>
            <PlainButton type="button">新建文件夹</PlainButton>
          </>
        )}
        <ToolbarEnd>
          <PlainButton type="button" aria-label="视图"><ViewGlyph />&nbsp;<Caret /></PlainButton>
          <PlainButton type="button" aria-label="预览窗格"><PaneGlyph /></PlainButton>
          <PlainButton type="button" aria-label="帮助"><HelpGlyph /></PlainButton>
        </ToolbarEnd>
      </Toolbar>
      <Body>
        <NavPane>
          {nav.map((n, i) => n ? (
            <NavItem key={i} $on={n[3]}>
              <NavButton type="button" $child={n[2]}><NavIcon kind={n[0]} />{n[1]}</NavButton>
            </NavItem>
          ) : <NavItem key={i} aria-hidden="true" />)}
        </NavPane>
        <ListPane>
          <Files>
            <colgroup>
              <col width="11" /><col width="205" /><col width="96" /><col width="97" /><col width="61" /><col width="3" /><col />
            </colgroup>
            <thead>
              <tr>
                <HeadCell colSpan={2} $first>
                  {title && <PlainButton as="span">名称<svg width="6" height="3" viewBox="0 0 6 3"><path d="M0 3h6L3 0z" fill="#999" /></svg></PlainButton>}
                </HeadCell>
                <HeadCell>{title && "修改日期"}</HeadCell>
                <HeadCell>{title && "类型"}</HeadCell>
                <HeadCell colSpan={2}>{title && "大小"}</HeadCell>
                <HeadCell $last aria-label="空" />
              </tr>
            </thead>
            <tbody>
              <Gap aria-hidden="true"><td colSpan={7} /></Gap>
              {files.map((f, i) => (
                <FileRow key={i} $on={selected === i}>
                  <td /><td><FileName>{f[4] || <DllIcon />}{f[0]}</FileName></td>
                  <td>{f[1]}</td><td>{f[2]}</td><td>{f[3]}</td><td /><td />
                </FileRow>
              ))}
            </tbody>
          </Files>
        </ListPane>
        <Scroll>
          <ScrollButton type="button" $up aria-label="向上"><Caret /></ScrollButton>
          <Thumb $h={thumb} />
          <ScrollButton type="button" aria-label="向下"><Caret /></ScrollButton>
        </Scroll>
      </Body>
      <Details>{details}</Details>
    </Frame>
  );
}

/* ---------- service dialog ---------- */

const LogBox = styled.div`
  flex: 1;
  margin: 5px 6px 0 3px;
  overflow: hidden;
  background: #fff;
  border: 1px solid;
  border-color: #4c4a47 #f4f2f0 #f4f2f0 #4c4a47;
  border-width: 2px 1px 1px 2px;
  color: #858585;
  line-height: 13px;
  white-space: nowrap;
`;

const DialogButtons = styled.div`
  display: flex;
  justify-content: space-between;
  padding: 6px 22px 4px 20px;
`;

const PushButton = styled.button`
  ${raised}
  width: 60px;
  height: 20px;
  background: #d6d3ce;
  font-weight: 500;
  ${(p) => p.$focus && css`border-color: #222; border-width: 2px;`}
  &:disabled { color: #8f8c88; text-shadow: 1px 1px 0 #fff; }
`;

const CursorHalo = styled.span`
  position: absolute;
  left: 935px;
  top: 188px;
  width: 24px;
  height: 24px;
  border-radius: 50%;
  background: rgba(24, 140, 40, 0.72);
  pointer-events: none;
`;

/* ---------- playback controller ---------- */

const Player = styled.aside`
  position: absolute;
  left: 1056px;
  top: 582px;
  width: 189px;
  height: 67px;
  display: flex;
  flex-direction: column;
  background: #f0f0f0;
`;

const PlayerTitle = styled.header`
  display: flex;
  justify-content: space-between;
  height: 15px;
  padding-left: 2px;
  background: #fff;
  font-size: 9px;
`;

const PlayerClose = styled.button`
  width: 13px;
  height: 13px;
  background: #c8474b;
  color: #fff;
  line-height: 10px;
`;

const PlayerTools = styled.div`
  display: flex;
  justify-content: space-between;
  align-items: center;
  height: 21px;
  padding: 0 3px 0 2px;
`;

const ToolGroup = styled.div`
  display: flex;
  gap: ${(p) => p.$gap}px;
`;

const SmallButton = styled.button`
  height: 15px;
  width: ${(p) => p.$w}px;
  display: grid;
  place-items: center;
  font-size: 9px;
  line-height: 12px;
  background: #f0f0f0;
  border: 1px solid;
  border-color: ${(p) => (p.$sunk ? "#777 #fff #fff #777" : "#fff #777 #777 #fff")};
  outline: ${(p) => (p.$teal ? "1px solid #9cc" : "none")};
  outline-offset: -1px;
  &:disabled { color: #b4b4b4; }
`;

const Seek = styled.input`
  appearance: none;
  width: 184px;
  height: 12px;
  margin: 0 0 0 2px;
  background:
    linear-gradient(#1414a8, #1414a8) 0 4px / 100% 3px no-repeat,
    repeating-linear-gradient(90deg, #aa2040 0 1px, transparent 1px 32px) 0 8px / 100% 3px no-repeat;
  &::-webkit-slider-thumb { appearance: none; width: 2px; height: 11px; background: #e01030; }
`;

const PlayerStatus = styled.div`
  display: flex;
  align-items: center;
  justify-content: space-between;
  flex: 1;
  padding: 2px 2px 0 1px;
  color: #2424a0;
  font-size: 9px;
  white-space: nowrap;
`;

const VolumeLabel = styled.label`
  display: flex;
  align-items: center;
  gap: 1px;
`;

const Volume = styled.input`
  appearance: none;
  width: 31px;
  height: 8px;
  background:
    linear-gradient(90deg, #18962a 50%, #f0f0f0 50%) 0 3px / 100% 2px no-repeat,
    linear-gradient(#58a868, #58a868) 0 2px / 100% 4px no-repeat;
  &::-webkit-slider-thumb { appearance: none; width: 3px; height: 7px; background: #0c7c20; }
`;

const Badge = styled.span`
  position: absolute;
  left: 1264px;
  top: 612px;
  width: 42px;
  height: 42px;
  padding-left: 4px;
  border: 1px solid #d4f0d4;
  border-radius: 50%;
  background: radial-gradient(circle at 40% 30%, #7ad87c, #36ad48);
  color: #fff;
  font: 11px/38px "Noto Sans CJK SC", sans-serif;
`;

export default function App() {
  return (
    <>
      <Global />
      <Screen>
        <IconGrid>
          {desktopIcons.map(([c, r, art, label], i) => (
            <IconCell key={i} $col={c} $row={r}>
              <IconArt>{art}</IconArt>
              <IconLabel>{label}</IconLabel>
            </IconCell>
          ))}
        </IconGrid>

        <Watermark $small>屏幕录像专家</Watermark>
        <Watermark>屏幕录像专家 未注册</Watermark>

        <ShareDock>
          <svg width="446" height="17" viewBox="0 0 446 17">
            <path d="M0 0h446l-13 13-5 3H20l-6-4z" fill="#0d479a" />
            <path d="M0 0h446l-4 5H6z" fill="#2d6cb8" />
            <path d="M0 0 14 12l6 4h408l5-3 13-13" fill="none" stroke="#7ba4d4" />
            <path d="M17 6h4M21 2v8M21 4h5v4h-5M27 2v8" stroke="#fff" strokeWidth="1.400" fill="none" />
          </svg>
          <DockButtons>
            <DockButton type="button" aria-label="最小化"><svg width="8" height="8"><path d="M1 7h6" stroke="#fff" strokeWidth="2" /></svg></DockButton>
            <DockButton type="button" aria-label="还原"><svg width="9" height="9"><path d="M3 3V1h5v4H6M1 4h5v4H1z" stroke="#fff" fill="none" /></svg></DockButton>
            <DockButton type="button" aria-label="关闭"><svg width="8" height="8"><path d="M1 1l6 6M7 1 1 7" stroke="#fff" strokeWidth="1.600" /></svg></DockButton>
          </DockButtons>
          <SharePanel>
            <span>正在分享屏幕</span>
            <time>00:35:49</time>
            <ShareViewers>1...等9人正在观看</ShareViewers>
          </SharePanel>
        </ShareDock>

        <Explorer x={252} y={79} />
        <Explorer
          x={270}
          y={96}
          details={
            <DetailArt>
              <svg width="36" height="32" viewBox="-3 0 36 32">
                <rect x=".5" y=".5" width="29" height="31" fill="#fdfdfd" stroke="#c2c2c2" />
                <path d="M5 4h9M5 8h9M5 12h9M5 16h9M5 20h9M5 24h9" stroke="#8c9cc8" strokeWidth="2" strokeDasharray="3 1" />
              </svg>
            </DetailArt>
          }
        />
        <Explorer
          x={305}
          y={131}
          files={tomcatFiles}
          thumb={286}
          details={<><DetailArt><SmallFolder w={27} h={34} /></DetailArt><span>29 个对象</span></>}
        />
        <Explorer
          x={235}
          y={61}
          title="server"
          path={["闲来麻将", "服务端", "server"]}
          nav={navTree}
          files={serverFiles}
          selected={1}
          details={
            <>
              <DetailArt><SyncIcon w={36} h={28} /></DetailArt>
              <DetailGrid>
                <DetailName>Correspond.exe</DetailName>
                <dt>修改日期:</dt><dd>2016/9/25 19:25</dd>
                <dt>创建日期:</dt><dd>2016/11/28 14:33</dd>
                <dd>应用程序</dd><dt>大小:</dt><dd>69.0 KB</dd>
              </DetailGrid>
            </>
          }
        />

        <Frame $x={643} $y={192} $w={346} $h={256} role="dialog" aria-label="协调服务器">
          <TitleBar $active>
            <SyncIcon w={10} h={11} />
            协调服务器 -- [ 运行 ]
            <CaptionSet />
          </TitleBar>
          <LogBox role="log">
            <p>【 2016-11-28 15:39:40 】正在初始化组件...</p>
            <p>【 2016-11-28 15:39:40 】服务启动成功</p>
          </LogBox>
          <DialogButtons>
            <PushButton type="button" $focus disabled>启动服务</PushButton>
            <PushButton type="button">停止服务</PushButton>
            <PushButton type="button" disabled>系统配置</PushButton>
            <PushButton type="button">退出系统</PushButton>
          </DialogButtons>
        </Frame>
        <CursorHalo />

        <Taskbar>
          <TaskSlot $w={120} />
          <TaskSlot $w={38} $on />
        </Taskbar>
        <Corner $v="top" $h="left" $w={46} $t={46} $edge={1} $side={2} />
        <Corner $v="bottom" $h="left" $w={49} $t={50} $edge={5} $side={2} />
        <Corner $v="top" $h="right" $w={4} $t={49} $edge={0} $side={4} />
        <Corner $v="bottom" $h="right" $w={52} $t={48} $edge={5} $side={4} />

        <Badge>57</Badge>
        <Player aria-label="控制">
          <PlayerTitle>控制<PlayerClose type="button" aria-label="关闭">×</PlayerClose></PlayerTitle>
          <PlayerTools>
            <ToolGroup $gap={2}>
              <SmallButton type="button" $w={14} $teal aria-label="播放"><svg width="9" height="9"><path d="M.5.5h8v8h-8z" fill="none" stroke="#123" /><path d="M3 2l4 2.500L3 7z" fill="#111" /></svg></SmallButton>
              <SmallButton type="button" $w={14} $teal aria-label="停止"><svg width="9" height="9"><path d="M.5.5h8v8h-8z" fill="none" stroke="#123" /><path d="M3 3h3v3H3z" fill="#111" /></svg></SmallButton>
              <SmallButton type="button" $w={14} disabled aria-label="暂停"><svg width="9" height="9"><path d="M.5.5h8v8h-8zM3.500 3v3M5.500 3v3" fill="none" stroke="#aaa" /></svg></SmallButton>
            </ToolGroup>
            <ToolGroup $gap={1}>
              <SmallButton type="button" $w={15} $sunk aria-label="窗口"><svg width="12" height="10"><path d="M.5.5h11v9H.5zM1 2h10" fill="none" stroke="#114" /><path d="M3 5.500h6M6 3.500v5M2 4l2 3M10 4 8 7" stroke="#114" /></svg></SmallButton>
              <SmallButton type="button" $w={15} $sunk aria-label="全屏"><svg width="11" height="10"><path d="M1 3V1h2M8 1h2v2M10 7v2H8M3 9H1V7M3 3h5v4H3z" fill="none" stroke="#111" /></svg></SmallButton>
              <SmallButton type="button" $w={15} $sunk aria-label="光标"><svg width="12" height="11"><circle cx="5" cy="5" r="4.500" fill="#188a28" /><path d="M5 3v7l2-2 2 3 1-1-1-2 2-1z" fill="#111" stroke="#fff" strokeWidth=".5" /></svg></SmallButton>
            </ToolGroup>
            <ToolGroup $gap={5}>
              <SmallButton type="button" $w={24}>菜单</SmallButton>
              <SmallButton type="button" $w={24} disabled>多节</SmallButton>
              <SmallButton type="button" $w={24}>定位</SmallButton>
            </ToolGroup>
          </PlayerTools>
          <Seek type="range" aria-label="进度" min="0" max="17212" defaultValue="6838" />
          <PlayerStatus>
            <span>帧:6838/17212 时间:22:47/57:22</span>
            <VolumeLabel>
              <svg width="6" height="8"><path d="M0 3h2l3-3v8L2 5H0z" fill="#58a868" /></svg>
              <Volume type="range" aria-label="音量" defaultValue="50" />
            </VolumeLabel>
          </PlayerStatus>
        </Player>
      </Screen>
    </>
  );
}
